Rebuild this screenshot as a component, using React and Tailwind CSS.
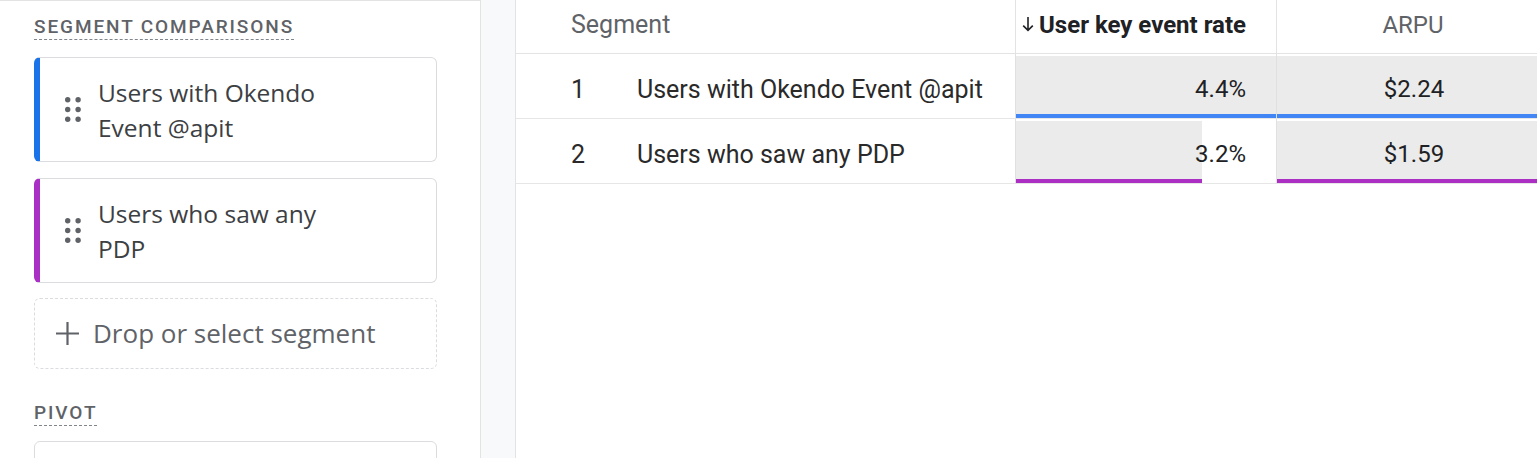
const segments = [
  { name: 'Users with Okendo Event @apit', color: '#1a73e8' },
  { name: 'Users who saw any PDP', color: '#aa2fc4' },
]

// table rows; bar widths are % of the visible column
const rows = [
  { id: 1, name: 'Users with Okendo Event @apit', rate: '4.4%', rateW: 100, arpu: '$2.24', arpuW: 100, bar: '#4285f4' },
  { id: 2, name: 'Users who saw any PDP', rate: '3.2%', rateW: 71.5, arpu: '$1.59', arpuW: 100, bar: '#ab2fc3' },
]

const DragDots = () => (
  <svg width="16" height="25" viewBox="0 0 16 25" className="shrink-0">
    {[2.7, 13.1].map(cx =>
      [2.7, 12.5, 22.3].map(cy => <circle key={`${cx}-${cy}`} cx={cx} cy={cy} r="2.7" fill="#5f6368" />)
    )}
  </svg>
)

const PlusIcon = () => (
  <svg width="25" height="25" viewBox="0 0 25 25" className="shrink-0">
    <path d="M12.5 1v23M1 12.5h23" stroke="#5f6368" strokeWidth="2.2" fill="none" />
  </svg>
)

const SortArrow = () => (
  <svg width="12" height="16" viewBox="0 0 12 16" className="shrink-0 mr-[5px] mb-[3px]">
    <path d="M6 1v13.5M1.2 9.6L6 14.4l4.8-4.8" stroke="#202124" strokeWidth="1.6" fill="none" />
  </svg>
)

const SectionLabel = ({ children }) => (
  <div className="flex">
    <span className="font-['Roboto',sans-serif] text-[19px] leading-[24px] font-medium tracking-[1.9px] text-[#5f6368] border-b border-dashed border-[#80868b]">
      {children}
    </span>
  </div>
)

const SegmentCard = ({ name, color }) => (
  <div
    className="flex items-center gap-[17px] h-[105px] pl-[25px] border border-[#dadce0] border-l-[6px] rounded-[6px]"
    style={{ borderLeftColor: color }}
  >
    <DragDots />
    <div className="w-[262px] font-['Open_Sans',sans-serif] text-[24.5px] leading-[35px] text-[#3c4043]">
      {name}
    </div>
  </div>
)

const MetricCell = ({ value, fill, barColor, width, className }) => (
  <div className={`flex flex-col pt-[2px] border-l border-[#e0e0e0] ${className}`}>
    <div
      className="flex-1 flex items-center pt-[8px]"
      style={{ background: `linear-gradient(to right, #ebebeb ${fill}%, #ffffff ${fill}%)` }}
    >
      {value}
    </div>
    <div className="h-[4px]">
      <div className="h-full" style={{ width: `${width}%`, background: barColor }} />
    </div>
  </div>
)

export default function App() {
  return (
    <div className="flex w-[1537px] h-[458px] overflow-hidden bg-white">
      {/* Left config panel */}
      <aside className="w-[481px] shrink-0 border-t border-r border-[#e3e3e3] pt-[14px] pl-[34px] pr-[43px]">
        <SectionLabel>SEGMENT COMPARISONS</SectionLabel>

        <div className="mt-[17px] flex flex-col gap-[16px]">
          {segments.map(s => (
            <SegmentCard key={s.name} {...s} />
          ))}
        </div>

        <div className="mt-[15px] flex items-center gap-[13px] h-[71px] pl-[20px] border border-dashed border-[#dadce0] rounded-[6px]">
          <PlusIcon />
          <span className="font-['Open_Sans',sans-serif] text-[26px] text-[#5f6368]">Drop or select segment</span>
        </div>

        <div className="mt-[32px]">
          <SectionLabel>PIVOT</SectionLabel>
        </div>
        <div className="mt-[15px] h-[60px] border border-[#dadce0] rounded-[6px]" />
      </aside>

      {/* Gutter */}
      <div className="w-[35px] shrink-0 bg-[#f8f9fa] border-r border-[#e3e3e3]" />

      {/* Table */}
      <main className="flex-1 min-w-0 font-['Roboto',sans-serif] text-[24px] text-[#202124]">
        <div className="flex h-[54px] border-b border-[#e3e3e3]">
          <div className="w-[499px] shrink-0 flex items-center pl-[55px] pb-[3px] text-[25px] text-[#5f6368]">Segment</div>
          <div className="w-[261px] shrink-0 flex items-center justify-end pr-[30px] pb-[3px] border-l border-[#e3e3e3] font-bold">
            <SortArrow />
            User key event rate
          </div>
          <div className="flex-1 flex items-center justify-center pl-[12px] pb-[3px] border-l border-[#e3e3e3] text-[#5f6368]">
            ARPU
          </div>
        </div>

        {rows.map(r => (
          <div key={r.id} className="flex h-[65px] border-b border-[#e6e6e6]">
            <div className="w-[499px] shrink-0 flex items-center pt-[7px] text-[25px] text-[#2a2a2a]">
              <span className="w-[121px] pl-[55px] shrink-0">{r.id}</span>
              <span>{r.name}</span>
            </div>
            <MetricCell
              value={<span className="w-full text-right pr-[30px]">{r.rate}</span>}
              fill={r.rateW}
              width={r.rateW}
              barColor={r.bar}
              className="w-[261px] shrink-0"
            />
            <MetricCell
              value={<span className="w-full text-center pl-[14px]">{r.arpu}</span>}
              fill={r.arpuW}
              width={r.arpuW}
              barColor={r.bar}
              className="flex-1"
            />
          </div>
        ))}
      </main>
    </div>
  )
}
